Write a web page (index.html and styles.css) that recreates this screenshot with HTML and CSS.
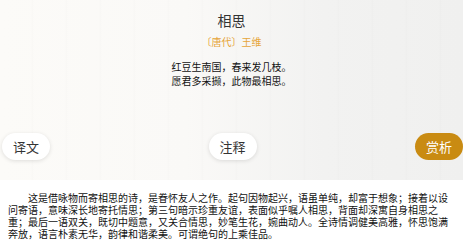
FILE: index.html
```html
<!DOCTYPE html>
<html lang="zh-CN">
<head>
    <meta charset="UTF-8">
    <meta name="viewport" content="width=device-width, initial-scale=1.0">
    <title>相思 - 王维</title>
    <link rel="stylesheet" href="styles.css">
</head>
<body>
    <div class="poem">
        <h1 class="title">相思</h1>
        <p class="author">〔唐代〕王维</p>
        <div class="verse">
            <p>红豆生南国，春来发几枝。</p>
            <p>愿君多采撷，此物最相思。</p>
        </div>
        <div class="tabs">
            <button class="tab">译文</button>
            <button class="tab">注释</button>
            <button class="tab active">赏析</button>
        </div>
    </div>
    <div class="note">
        <p>这是借咏物而寄相思的诗，是眷怀友人之作。起句因物起兴，语虽单纯，却富于想象；接着以设问寄语，意味深长地寄托情思；第三句暗示珍重友谊，表面似乎嘱人相思，背面却深寓自身相思之重；最后一语双关，既切中题意，又关合情思，妙笔生花，婉曲动人。全诗情调健美高雅，怀思饱满奔放，语言朴素无华，韵律和谐柔美。可谓绝句的上乘佳品。</p>
    </div>
</body>
</html>
```

FILE: styles.css
```css
body {
    margin: 0;
    font-family: "Noto Sans CJK SC", "Noto Sans", sans-serif;
    background-color: #ffffff;
    color: #111111;
}

/* paper-like top area */
.poem {
    height: 180px;
    box-sizing: border-box;
    padding-top: 11px;
    text-align: center;
    background-color: #f7f6f4;
    background-image:
        repeating-linear-gradient(90deg, rgba(0, 0, 0, 0) 0, rgba(0, 0, 0, 0) 31px, rgba(0, 0, 0, 0.012) 32px, rgba(0, 0, 0, 0) 34px),
        linear-gradient(90deg, #fcfbf8 0%, #faf9f7 40%, #f2f2f1 70%, #f0f0ef 100%);
}

.title {
    margin: 0;
    font-size: 14px;
    font-weight: normal;
    line-height: 18px;
    color: #333333;
}

.author {
    margin: 6px 0 0;
    font-size: 10px;
    line-height: 14px;
    color: #e6a53a;
}

.verse {
    margin-top: 11px;
}

.verse p {
    margin: 0;
    font-size: 10px;
    line-height: 14px;
    color: #111111;
}

.tabs {
    display: flex;
    justify-content: space-between;
    align-items: center;
    margin-top: 45px;
    padding: 0 0 0 2px;
}

.tab {
    width: 48px;
    height: 27px;
    border: none;
    border-radius: 14px;
    background-color: #ffffff;
    box-shadow: 0 1px 4px rgba(0, 0, 0, 0.12);
    font-family: inherit;
    font-size: 13px;
    color: #333333;
    padding: 0;
}

.tab.active {
    background-color: #c98b12;
    color: #ffffff;
    box-shadow: none;
}

.note {
    padding: 12px 13px 0 8px;
}

.note p {
    margin: 0;
    font-size: 10px;
    line-height: 12px;
    text-indent: 2em;
    color: #111111;
}
```
